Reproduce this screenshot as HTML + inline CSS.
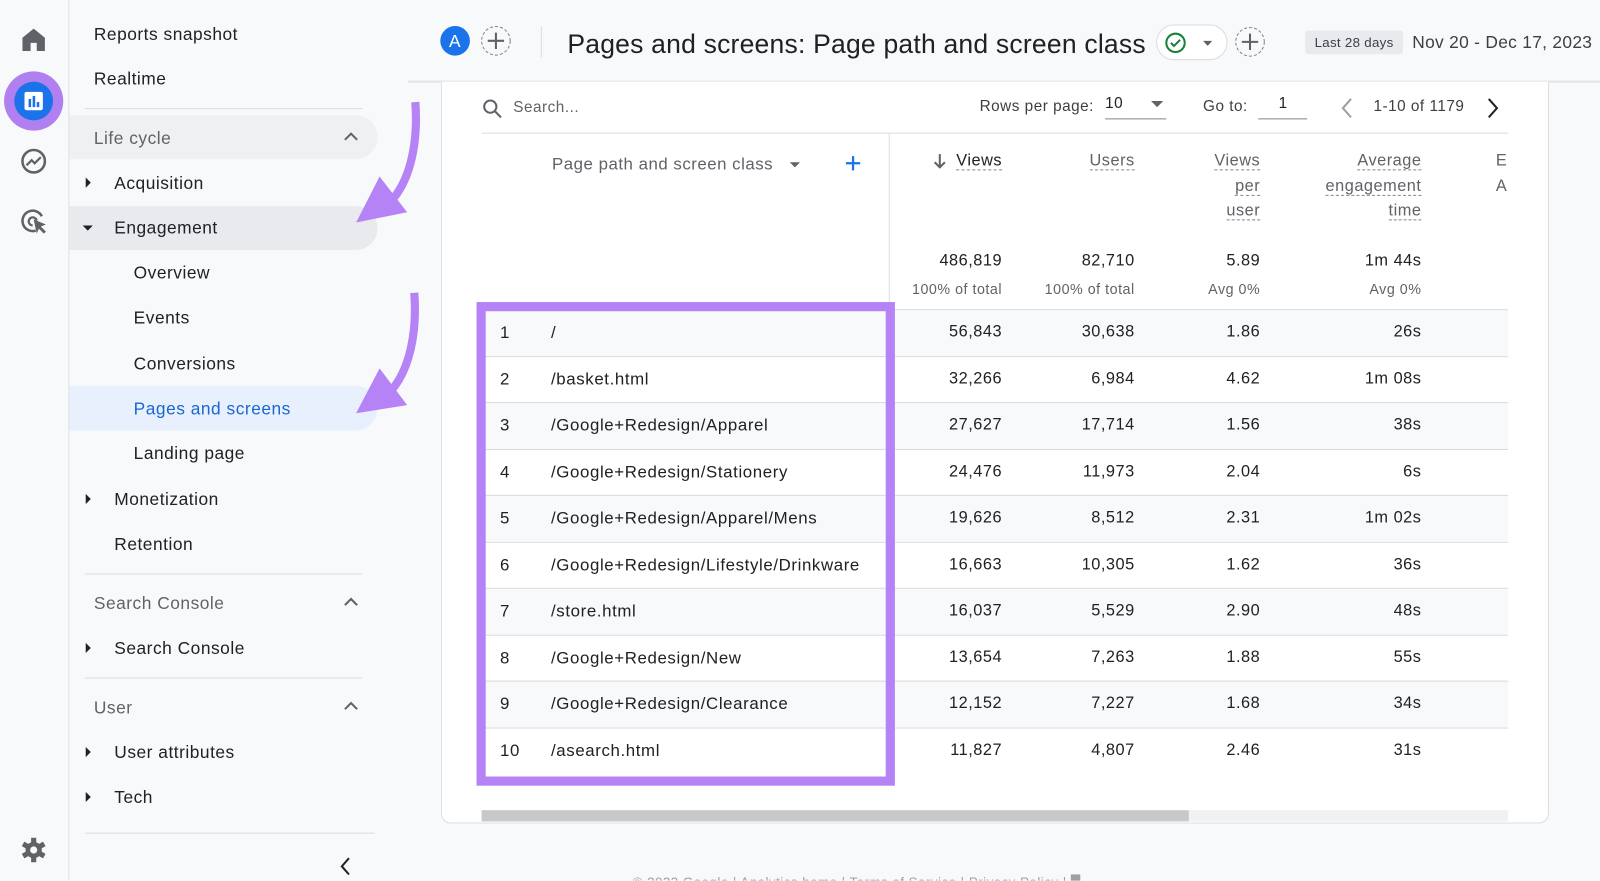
<!DOCTYPE html>
<html><head><meta charset="utf-8"><style>
*{margin:0;padding:0;box-sizing:border-box}
html,body{width:1600px;height:880px;overflow:hidden;background:#f8f9fa;font-family:"Liberation Sans",sans-serif;color:#202124}
#w{position:absolute;left:0;top:0;width:1568px;height:863px;overflow:hidden;transform:scale(1.020408);transform-origin:0 0;background:#f8f9fa;letter-spacing:0.5px}
.a{position:absolute;white-space:nowrap}
.sb{font-size:17px;color:#202124;margin-top:2px}
.g{color:#5f6368}
.hr{position:absolute;height:1px;background:#dadce0}
.tri{position:absolute;width:0;height:0}
.num{position:absolute;font-size:16px;color:#202124;text-align:right}
.hd{position:absolute;font-size:16px;color:#5f6368;text-align:right;line-height:24.5px}
.hd span{border-bottom:1px dashed #80868b}
.rt{font-size:16.5px;letter-spacing:0.6px}
</style></head><body><div id="w">
<div class="a" style="left:67px;top:0;width:1px;height:863px;background:#e0e0e0"></div>
<svg class="a" style="left:0;top:0" width="67" height="863">
<path d="M22 50V37l11-9 11 9v13h-8v-8h-6v8z" fill="#5f6368"/>
<circle cx="33" cy="99" r="29" fill="#b07ff0"/><circle cx="33" cy="99" r="19" fill="#1a73e8"/>
<rect x="24" y="90" width="18" height="18" rx="2" fill="#fff"/><rect x="28" y="97" width="2.5" height="8" fill="#1a73e8"/><rect x="32" y="94" width="2.5" height="11" fill="#1a73e8"/><rect x="36" y="100" width="2.5" height="5" fill="#1a73e8"/>
<circle cx="33" cy="158" r="11" fill="none" stroke="#5f6368" stroke-width="2.5"/><path d="M26 162l5-5 3 3 6-6" fill="none" stroke="#5f6368" stroke-width="2.2"/>
<path d="M41 212a10 10 0 1 0-6 14" fill="none" stroke="#5f6368" stroke-width="2.5"/><path d="M36 216a4 4 0 1 0-4 5" fill="none" stroke="#5f6368" stroke-width="2.2"/><path d="M33 215l12 5-5 2 5 5-2 2-5-5-2 5z" fill="#5f6368"/>
<g transform="translate(33 833)" fill="#5f6368"><circle r="8"/><rect x="-2.5" y="-12" width="5" height="24"/><rect x="-2.5" y="-12" width="5" height="24" transform="rotate(60)"/><rect x="-2.5" y="-12" width="5" height="24" transform="rotate(120)"/><circle r="3.5" fill="#f8f9fa"/></g>
</svg>
<div class="a sb" style="left:92px;top:22px">Reports snapshot</div>
<div class="a sb" style="left:92px;top:66px">Realtime</div>
<div class="hr" style="left:83px;top:106px;width:272px"></div>
<div class="a" style="left:68px;top:113px;width:302px;height:43px;background:#eef0f2;border-radius:0 22px 22px 0"></div>
<div class="a sb g" style="left:92px;top:124px">Life cycle</div>
<svg class="a" style="left:336px;top:128px" width="16" height="12"><path d="M2 9l6-6 6 6" fill="none" stroke="#5f6368" stroke-width="2"/></svg>
<div class="tri" style="left:84px;top:174px;border-left:5px solid #202124;border-top:5px solid transparent;border-bottom:5px solid transparent"></div>
<div class="a sb" style="left:112px;top:168px">Acquisition</div>
<div class="a" style="left:68px;top:202px;width:302px;height:43px;background:#e8eaed;border-radius:0 22px 22px 0"></div>
<div class="tri" style="left:81px;top:221px;border-top:5px solid #202124;border-left:5px solid transparent;border-right:5px solid transparent"></div>
<div class="a sb" style="left:112px;top:212px">Engagement</div>
<div class="a sb" style="left:131px;top:256px">Overview</div>
<div class="a sb" style="left:131px;top:300px">Events</div>
<div class="a sb" style="left:131px;top:345px">Conversions</div>
<div class="a" style="left:68px;top:378px;width:302px;height:44px;background:#e8f0fe;border-radius:0 22px 22px 0"></div>
<div class="a sb" style="left:131px;top:389px;color:#1967d2">Pages and screens</div>
<div class="a sb" style="left:131px;top:433px">Landing page</div>
<div class="tri" style="left:84px;top:484px;border-left:5px solid #202124;border-top:5px solid transparent;border-bottom:5px solid transparent"></div>
<div class="a sb" style="left:112px;top:478px">Monetization</div>
<div class="a sb" style="left:112px;top:522px">Retention</div>
<div class="hr" style="left:83px;top:562px;width:272px"></div>
<div class="a sb g" style="left:92px;top:580px">Search Console</div>
<svg class="a" style="left:336px;top:584px" width="16" height="12"><path d="M2 9l6-6 6 6" fill="none" stroke="#5f6368" stroke-width="2"/></svg>
<div class="tri" style="left:84px;top:630px;border-left:5px solid #202124;border-top:5px solid transparent;border-bottom:5px solid transparent"></div>
<div class="a sb" style="left:112px;top:624px">Search Console</div>
<div class="hr" style="left:83px;top:664px;width:272px"></div>
<div class="a sb g" style="left:92px;top:682px">User</div>
<svg class="a" style="left:336px;top:686px" width="16" height="12"><path d="M2 9l6-6 6 6" fill="none" stroke="#5f6368" stroke-width="2"/></svg>
<div class="tri" style="left:84px;top:732px;border-left:5px solid #202124;border-top:5px solid transparent;border-bottom:5px solid transparent"></div>
<div class="a sb" style="left:112px;top:726px">User attributes</div>
<div class="tri" style="left:84px;top:776px;border-left:5px solid #202124;border-top:5px solid transparent;border-bottom:5px solid transparent"></div>
<div class="a sb" style="left:112px;top:770px">Tech</div>
<div class="hr" style="left:83px;top:816px;width:284px"></div>
<svg class="a" style="left:330px;top:839px" width="16" height="20"><path d="M12 2l-7 8 7 8" fill="none" stroke="#202124" stroke-width="2"/></svg>
<div class="a" style="left:400px;top:79px;width:1168px;height:2px;background:#e3e4e6"></div>
<svg class="a" style="left:430px;top:24px" width="120" height="34">
<circle cx="16" cy="16" r="14.5" fill="#1a73e8"/><text x="16" y="22" fill="#fff" font-size="17" text-anchor="middle" font-family="Liberation Sans">A</text>
<circle cx="56" cy="16" r="14" fill="none" stroke="#80868b" stroke-dasharray="3 2"/><path d="M56 8v16M48 16h16" stroke="#5f6368" stroke-width="2"/>
<rect x="100" y="2" width="1" height="30" fill="#dadce0"/>
</svg>
<div class="a" style="left:556px;top:28px;font-size:26px;color:#202124;letter-spacing:0.2px">Pages and screens: Page path and screen class</div>
<div class="a" style="left:1133px;top:24px;width:70px;height:35px;border:1px solid #dadce0;border-radius:18px;background:#fff"></div>
<svg class="a" style="left:1140px;top:30px" width="60" height="24"><circle cx="12" cy="12" r="9" fill="none" stroke="#188038" stroke-width="2"/><path d="M7.5 12l3 3 6-6" fill="none" stroke="#188038" stroke-width="2"/><path d="M39 10h9l-4.5 5z" fill="#5f6368"/></svg>
<svg class="a" style="left:1209px;top:24px" width="32" height="34"><circle cx="16" cy="17" r="14" fill="none" stroke="#80868b" stroke-dasharray="3 2"/><path d="M16 9v16M8 17h16" stroke="#5f6368" stroke-width="2"/></svg>
<div class="a" style="left:1279px;top:30px;width:96px;height:23px;background:#e8eaed;border-radius:3px;font-size:13px;color:#3c4043;text-align:center;line-height:23px;letter-spacing:0.3px">Last 28 days</div>
<div class="a" style="left:1384px;top:32px;font-size:17px;color:#3c4043;letter-spacing:0.3px">Nov 20 - Dec 17, 2023</div>
<div class="a" style="left:432px;top:80px;width:1086px;height:727px;background:#fff;border:1px solid #dadce0;border-top:none;border-radius:0 0 10px 10px"></div>
<svg class="a" style="left:472px;top:96px" width="22" height="22"><circle cx="8.5" cy="8.5" r="6" fill="none" stroke="#5f6368" stroke-width="2"/><path d="M13 13l6 6" stroke="#5f6368" stroke-width="2"/></svg>
<div class="a" style="left:503px;top:97px;font-size:15px;color:#5f6368">Search...</div>
<div class="a" style="left:960px;top:96px;font-size:15px;color:#3c4043">Rows per page:</div>
<div class="a" style="left:1083px;top:93px;font-size:15px;color:#202124">10</div>
<div class="tri" style="left:1128px;top:99px;border-top:6px solid #5f6368;border-left:6px solid transparent;border-right:6px solid transparent"></div>
<div class="a" style="left:1083px;top:116px;width:60px;height:1px;background:#80868b"></div>
<div class="a" style="left:1179px;top:96px;font-size:15px;color:#3c4043">Go to:</div>
<div class="a" style="left:1253px;top:93px;font-size:15px;color:#202124">1</div>
<div class="a" style="left:1233px;top:116px;width:48px;height:1px;background:#80868b"></div>
<svg class="a" style="left:1312px;top:95px" width="16" height="22"><path d="M12 2l-8 9 8 9" fill="none" stroke="#9aa0a6" stroke-width="2"/></svg>
<div class="a" style="left:1346px;top:96px;font-size:15px;color:#3c4043">1-10 of 1179</div>
<svg class="a" style="left:1455px;top:95px" width="16" height="22"><path d="M4 2l8 9-8 9" fill="none" stroke="#202124" stroke-width="2"/></svg>
<div class="a" style="left:472px;top:130px;width:1006px;height:1px;background:#dadce0"></div>
<div class="a" style="left:871px;top:130px;width:1px;height:173px;background:#dadce0"></div>
<div class="a" style="left:541px;top:152px;font-size:16.5px;color:#5f6368">Page path and screen class</div>
<div class="tri" style="left:774px;top:159px;border-top:5px solid #5f6368;border-left:5px solid transparent;border-right:5px solid transparent"></div>
<svg class="a" style="left:827px;top:151px" width="18" height="18"><path d="M9 2v14M2 9h14" stroke="#1a73e8" stroke-width="2.2"/></svg>
<svg class="a" style="left:913px;top:149px" width="16" height="18"><path d="M8 2v13M3 10l5 5 5-5" fill="none" stroke="#5f6368" stroke-width="2"/></svg>
<div class="hd" style="right:586px;top:146px"><span style="color:#202124">Views</span></div>
<div class="hd" style="right:456px;top:146px"><span>Users</span></div>
<div class="hd" style="right:333px;top:146px"><span>Views</span><br><span>per</span><br><span>user</span></div>
<div class="hd" style="right:175px;top:146px"><span>Average</span><br><span>engagement</span><br><span>time</span></div>
<div class="a" style="left:1466px;top:146px;width:12px;overflow:hidden;font-size:16px;color:#5f6368;line-height:24.5px">E<br>A</div>
<div class="num" style="right:586px;top:247px">486,819</div>
<div class="num" style="right:456px;top:247px">82,710</div>
<div class="num" style="right:333px;top:247px">5.89</div>
<div class="num" style="right:175px;top:247px">1m 44s</div>
<div class="num" style="right:586px;top:275px;font-size:14px;color:#5f6368">100% of total</div>
<div class="num" style="right:456px;top:275px;font-size:14px;color:#5f6368">100% of total</div>
<div class="num" style="right:333px;top:275px;font-size:14px;color:#5f6368">Avg 0%</div>
<div class="num" style="right:175px;top:275px;font-size:14px;color:#5f6368">Avg 0%</div>
<div id="rows"></div>
<div class="a" style="left:472px;top:794px;width:1006px;height:11px;background:#f1f1f1"></div>
<div class="a" style="left:472px;top:794px;width:693px;height:11px;background:#c8c8c8"></div>
<div class="a" style="left:467px;top:296px;width:410px;height:474px;border:9px solid #b583f5"></div>
<div class="a" style="left:620px;top:857px;font-size:13px;color:#9aa0a6">© 2023 Google | Analytics home | Terms of Service | Privacy Policy | ▀</div>
<svg class="a" style="left:0;top:0" width="450" height="450">
<path d="M407 100C410 140 402 175 385 195" fill="none" stroke="#b583f5" stroke-width="8"/>
<path d="M349 218L372 173L399 208Z" fill="#b583f5"/>
<path d="M406 287C409 327 401 362 384 382" fill="none" stroke="#b583f5" stroke-width="8"/>
<path d="M349 405L372 361L399 397Z" fill="#b583f5"/>
</svg>
</div>
<script>
var d=[["/","56,843","30,638","1.86","26s"],["/basket.html","32,266","6,984","4.62","1m 08s"],["/Google+Redesign/Apparel","27,627","17,714","1.56","38s"],["/Google+Redesign/Stationery","24,476","11,973","2.04","6s"],["/Google+Redesign/Apparel/Mens","19,626","8,512","2.31","1m 02s"],["/Google+Redesign/Lifestyle/Drinkware","16,663","10,305","1.62","36s"],["/store.html","16,037","5,529","2.90","48s"],["/Google+Redesign/New","13,654","7,263","1.88","55s"],["/Google+Redesign/Clearance","12,152","7,227","1.68","34s"],["/asearch.html","11,827","4,807","2.46","31s"]];
var h="";for(var i=0;i<10;i++){var t=303+i*45.5;
h+='<div class="a" style="left:472px;top:'+t+'px;width:1006px;height:45.5px;border-top:1px solid #dadce0;background:'+(i%2==0?'#f8f9fa':'#fff')+'"></div>';
var y=t+14;
h+='<div class="a rt" style="left:490px;top:'+y+'px">'+(i+1)+'</div><div class="a rt" style="left:540px;top:'+y+'px">'+d[i][0]+'</div>';
h+='<div class="num" style="right:586px;top:'+y+'px">'+d[i][1]+'</div><div class="num" style="right:456px;top:'+y+'px">'+d[i][2]+'</div><div class="num" style="right:333px;top:'+y+'px">'+d[i][3]+'</div><div class="num" style="right:175px;top:'+y+'px">'+d[i][4]+'</div>';}
document.getElementById("rows").outerHTML=h;
</script>
</body></html>
